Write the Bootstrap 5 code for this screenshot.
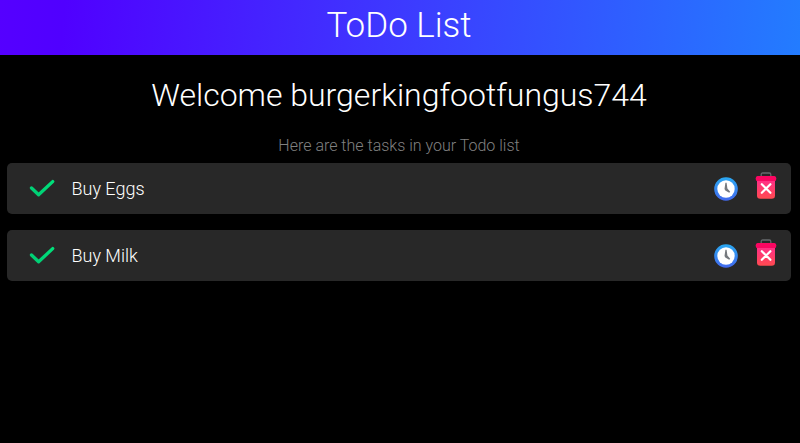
<!DOCTYPE html>
<html lang="en">
<head>
<meta charset="utf-8">
<meta name="viewport" content="width=device-width, initial-scale=1">
<title>ToDo List</title>
<link href="https://cdn.jsdelivr.net/npm/bootstrap@5.3.0/dist/css/bootstrap.min.css" rel="stylesheet">
<style>
body { background: #000; color: #fff; font-family: Roboto, sans-serif; font-weight: 300; overflow: hidden; }
.top-bar { height: 55px; padding: 1px 2px 4px 0; background: linear-gradient(95deg, #5500ff 0%, #5000ff 8%, #3d3aff 50%, #237cff 100%); }
.top-bar h1 { font-size: 35px; font-weight: 300; line-height: 50px; }
.welcome { font-size: 32px; font-weight: 300; line-height: 40px; padding: 20px 2px 0 0; }
.hint { font-size: 16px; line-height: 24px; color: #808080; margin-top: 19px; margin-bottom: 5px; padding-right: 2px; }
.tasks { padding: 0 9px 0 7px; }
.task { height: 51px; background: #282828; border-radius: 5px; padding: 0 14px 0 22px; font-size: 18px; font-weight: 300; }
.task-name { margin-left: 16.5px; }
.task svg { display: block; }
.bin { margin-left: 17px; margin-bottom: 5px; }
</style>
<script src="https://cdn.jsdelivr.net/npm/bootstrap@5.3.0/dist/js/bootstrap.bundle.min.js"></script>
</head>
<body>
<svg width="0" height="0" class="position-absolute" aria-hidden="true">
  <defs>
    <linearGradient id="green" x1="0" y1="1" x2="1" y2="0"><stop offset="0" stop-color="#00cc74"/><stop offset="1" stop-color="#00e07a"/></linearGradient>
    <linearGradient id="blue" x1="0" y1="0" x2="0" y2="1"><stop offset="0" stop-color="#2aa9f2"/><stop offset="1" stop-color="#4268ed"/></linearGradient>
    <linearGradient id="red" x1="0" y1="0" x2="0" y2="1"><stop offset="0" stop-color="#ff2f88"/><stop offset="1" stop-color="#ff4a50"/></linearGradient>
    <symbol id="check" viewBox="0 0 26 20"><path d="M2.5 9 9.6 15.8 23.7 2.6" fill="none" stroke="url(#green)" stroke-width="3.3" stroke-linecap="round" stroke-linejoin="round"/></symbol>
    <symbol id="clock" viewBox="0 0 24 24"><circle cx="12" cy="12" r="11.8" fill="url(#blue)"/><circle cx="12" cy="12" r="8.7" fill="#fff"/><path d="M11.4 5.8h1.2l.8 5.8 2.8 3.2-1 1-3.9-2.4-.8-1.4z" fill="#75797e"/></symbol>
    <symbol id="trash" viewBox="0 0 22 28"><path d="M6.2 4.5V2.5Q6.2 1 7.7 1h6.6Q15.8 1 15.8 2.5v2" fill="none" stroke="#66696c" stroke-width="1.3"/><path d="M2 8h18v15.5q0 3.3-3.3 3.3H5.3Q2 26.8 2 23.5z" fill="url(#red)"/><path d="M2.5 4h17Q21.3 4 21.3 6.5T20 9H2Q.7 9 .7 6.5T2.5 4z" fill="#fa0661"/><path d="m6.8 12.2 8.6 8.6m0-8.6-8.6 8.6" fill="none" stroke="#fff" stroke-width="2.2" stroke-linecap="round"/></symbol>
  </defs>
</svg>
<header class="top-bar text-center"><h1 class="m-0">ToDo List</h1></header>
<main>
  <h2 class="welcome text-center m-0">Welcome burgerkingfootfungus744</h2>
  <p class="hint text-center">Here are the tasks in your Todo list</p>
  <div class="tasks d-flex flex-column gap-3">
    <div class="task d-flex align-items-center">
      <svg width="26" height="20"><use href="#check"/></svg>
      <span class="task-name flex-grow-1">Buy Eggs</span>
      <svg width="24" height="24"><use href="#clock"/></svg>
      <svg class="bin" width="22" height="28"><use href="#trash"/></svg>
    </div>
    <div class="task d-flex align-items-center">
      <svg width="26" height="20"><use href="#check"/></svg>
      <span class="task-name flex-grow-1">Buy Milk</span>
      <svg width="24" height="24"><use href="#clock"/></svg>
      <svg class="bin" width="22" height="28"><use href="#trash"/></svg>
    </div>
  </div>
</main>
</body>
</html>
